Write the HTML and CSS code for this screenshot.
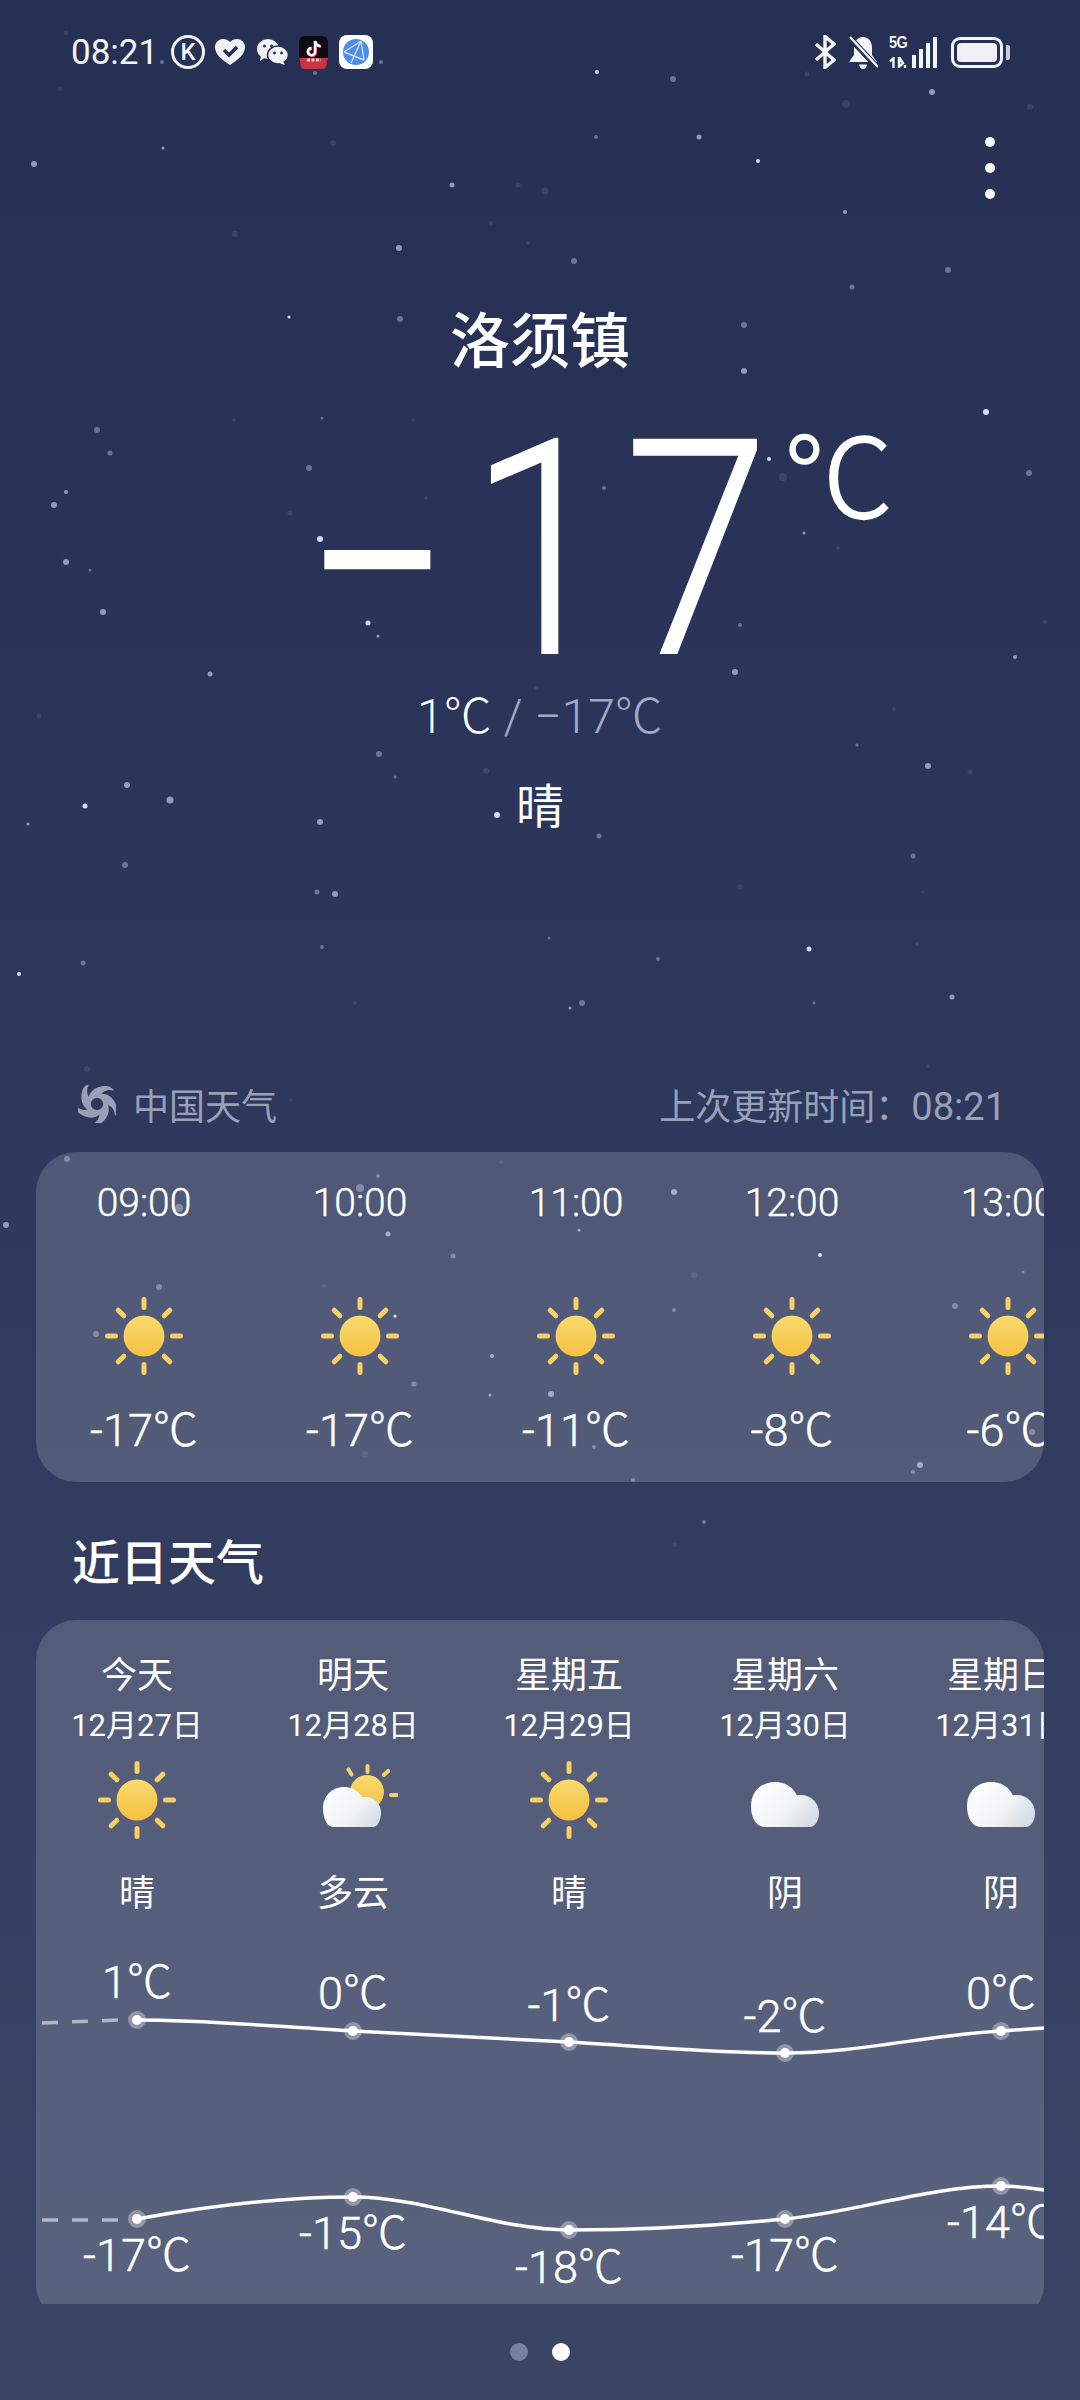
FILE: index.html
```html
<!DOCTYPE html>
<html lang="zh-CN">

<head>
  <meta charset="UTF-8">
  <meta name="viewport" content="width=device-width, initial-scale=1.0">
  <title>天气</title>
  <link rel="stylesheet" href="styles.css">
</head>

<body>

  <!-- shared icons -->
  <svg class="defs" width="0" height="0">
    <defs>
      <linearGradient id="sunFill" x1="0" y1="0" x2="0" y2="1">
        <stop offset="0" stop-color="#f8dc6e"/>
        <stop offset="1" stop-color="#f5bf42"/>
      </linearGradient>
      <linearGradient id="cloudFill" gradientUnits="userSpaceOnUse" x1="-30" y1="-18" x2="30" y2="30">
        <stop offset="0" stop-color="#ffffff"/>
        <stop offset="0.55" stop-color="#f1f4f7"/>
        <stop offset="1" stop-color="#cdd6e0"/>
      </linearGradient>
      <g id="ray"><rect x="-2.5" y="-39" width="5" height="13" rx="2.5" fill="#f6d064"/></g>
      <symbol id="sun" viewBox="-45 -45 90 90">
        <circle r="20.5" fill="url(#sunFill)"/>
        <use href="#ray"/>
        <use href="#ray" transform="rotate(45)"/>
        <use href="#ray" transform="rotate(90)"/>
        <use href="#ray" transform="rotate(135)"/>
        <use href="#ray" transform="rotate(180)"/>
        <use href="#ray" transform="rotate(225)"/>
        <use href="#ray" transform="rotate(270)"/>
        <use href="#ray" transform="rotate(315)"/>
      </symbol>
      <symbol id="cloud" viewBox="-45 -45 90 90">
        <path d="M-20 27 C-29 27 -34 18 -34 6 C-34 -8 -24 -18 -10 -18 C4 -18 14 -8 14 6 L14 27 Z" fill="url(#cloudFill)"/>
        <path d="M4 27 C0 24 -2 19 -2 13 C-2 3 6 -5 16 -5 C26 -5 34 3 34 13 C34 21 30 27 24 27 Z" fill="url(#cloudFill)"/>
      </symbol>
      <symbol id="partly" viewBox="-45 -45 90 90">
        <circle cx="14" cy="-8" r="17" fill="url(#sunFill)"/>
        <rect x="12.5" y="-36" width="4" height="10" rx="2" fill="#f6d064"/>
        <rect x="-5" y="-33" width="4" height="10" rx="2" fill="#f6d064" transform="rotate(-32 -3 -28)"/>
        <rect x="31" y="-32" width="4" height="10" rx="2" fill="#f6d064" transform="rotate(48 33 -27)"/>
        <rect x="36" y="-7" width="10" height="4" rx="2" fill="#f6d064"/>
        <path d="M-20 27 C-26 27 -30 18 -30 8 C-30 -4 -21 -13 -9 -13 C3 -13 12 -4 12 8 L12 27 Z" fill="url(#cloudFill)"/>
        <path d="M0 27 C-2 23 -2 17 -2 12 C-2 4 5 -3 13 -3 C21 -3 28 4 28 12 C28 20 25 27 20 27 Z" fill="url(#cloudFill)"/>
      </symbol>
    </defs>
  </svg>

  <!-- drifting snow behind everything -->
  <svg class="snow" viewBox="0 0 1080 2400">
    <g class="s1">
      <circle cx="597" cy="72" r="2"/><circle cx="758" cy="161" r="2"/><circle cx="289" cy="317" r="1.6"/>
      <circle cx="986" cy="412" r="3"/><circle cx="769" cy="459" r="2"/><circle cx="320" cy="539" r="3"/>
      <circle cx="368" cy="623" r="2.5"/><circle cx="85" cy="806" r="2.5"/><circle cx="497" cy="815" r="3"/>
      <circle cx="809" cy="949" r="2.5"/><circle cx="19" cy="974" r="2"/><circle cx="820" cy="1255" r="2"/>
      <circle cx="395" cy="1316" r="1.6"/>
    </g>
    <g class="s2">
      <circle cx="932" cy="92" r="3"/><circle cx="699" cy="137" r="2.5"/><circle cx="163" cy="148" r="1.5"/>
      <circle cx="34" cy="164" r="3"/><circle cx="452" cy="185" r="2.5"/><circle cx="845" cy="212" r="2"/>
      <circle cx="399" cy="248" r="3"/><circle cx="744" cy="371" r="3"/><circle cx="66" cy="492" r="2"/>
      <circle cx="54" cy="505" r="3"/><circle cx="804" cy="533" r="1.5"/><circle cx="66" cy="562" r="3"/>
      <circle cx="103" cy="612" r="3"/><circle cx="378" cy="636" r="1.5"/><circle cx="210" cy="674" r="2.5"/>
      <circle cx="735" cy="672" r="3"/><circle cx="1015" cy="657" r="2"/><circle cx="928" cy="766" r="3"/>
      <circle cx="127" cy="785" r="3"/><circle cx="170" cy="800" r="3.5"/><circle cx="28" cy="824" r="1.5"/>
      <circle cx="320" cy="822" r="3"/><circle cx="335" cy="894" r="3"/><circle cx="952" cy="997" r="2.5"/>
      <circle cx="570" cy="1008" r="1.5"/><circle cx="674" cy="1192" r="3"/><circle cx="6" cy="1225" r="3"/>
      <circle cx="388" cy="1234" r="2.5"/><circle cx="579" cy="1230" r="1.6"/><circle cx="492" cy="1356" r="2"/>
      <circle cx="490" cy="1395" r="1.5"/><circle cx="551" cy="1394" r="3"/><circle cx="920" cy="1465" r="3"/>
    </g>
    <g class="s3">
      <circle cx="673" cy="79" r="3"/><circle cx="596" cy="137" r="2"/><circle cx="315" cy="73" r="2"/>
      <circle cx="381" cy="62" r="2"/><circle cx="162" cy="62" r="2"/><circle cx="574" cy="261" r="3"/>
      <circle cx="948" cy="270" r="3"/><circle cx="852" cy="287" r="2.5"/><circle cx="400" cy="319" r="3"/>
      <circle cx="744" cy="325" r="3"/><circle cx="97" cy="430" r="3"/><circle cx="110" cy="453" r="2.5"/>
      <circle cx="322" cy="418" r="1.5"/><circle cx="309" cy="468" r="3"/><circle cx="1029" cy="473" r="3"/>
      <circle cx="604" cy="488" r="2"/><circle cx="90" cy="570" r="1.5"/><circle cx="740" cy="625" r="2"/>
      <circle cx="379" cy="754" r="3"/><circle cx="395" cy="777" r="1.5"/><circle cx="857" cy="745" r="1.5"/>
      <circle cx="599" cy="836" r="2.5"/><circle cx="125" cy="865" r="3"/><circle cx="913" cy="856" r="2.5"/>
      <circle cx="317" cy="892" r="2.5"/><circle cx="322" cy="947" r="2"/><circle cx="549" cy="938" r="1.5"/>
      <circle cx="658" cy="959" r="2"/><circle cx="83" cy="963" r="2.5"/><circle cx="814" cy="1003" r="1.5"/>
      <circle cx="582" cy="1003" r="3"/><circle cx="67" cy="1159" r="3"/><circle cx="378" cy="1176" r="2"/>
      <circle cx="360" cy="1188" r="4"/><circle cx="179" cy="1208" r="4"/><circle cx="453" cy="1256" r="2.5"/>
      <circle cx="1023" cy="1272" r="1.5"/><circle cx="159" cy="1287" r="3"/><circle cx="955" cy="1306" r="3"/>
      <circle cx="674" cy="1310" r="2"/><circle cx="96" cy="1334" r="3"/><circle cx="414" cy="1384" r="2.5"/>
      <circle cx="913" cy="1472" r="2"/><circle cx="633" cy="1480" r="2"/><circle cx="594" cy="1447" r="2"/>
      <circle cx="1032" cy="1432" r="3"/><circle cx="704" cy="1522" r="2"/>
    </g>
    <g class="s4">
      <circle cx="807" cy="74" r="2.5"/><circle cx="846" cy="104" r="4"/><circle cx="1030" cy="107" r="3"/>
      <circle cx="60" cy="89" r="2"/><circle cx="66" cy="33" r="2"/><circle cx="333" cy="143" r="3"/>
      <circle cx="518" cy="185" r="2.5"/><circle cx="545" cy="191" r="3.5"/><circle cx="235" cy="234" r="3"/>
      <circle cx="491" cy="223" r="2"/><circle cx="528" cy="243" r="2"/><circle cx="234" cy="420" r="2"/>
      <circle cx="413" cy="420" r="2"/><circle cx="783" cy="477" r="4"/><circle cx="426" cy="498" r="2"/>
      <circle cx="838" cy="548" r="2"/><circle cx="1045" cy="622" r="2"/><circle cx="290" cy="513" r="2.5"/>
      <circle cx="536" cy="688" r="2.5"/><circle cx="39" cy="716" r="2.5"/><circle cx="894" cy="709" r="2"/>
      <circle cx="970" cy="772" r="2.5"/><circle cx="486" cy="771" r="3"/><circle cx="740" cy="887" r="2.5"/>
      <circle cx="923" cy="892" r="1.5"/><circle cx="917" cy="944" r="2"/><circle cx="355" cy="1003" r="2"/>
      <circle cx="87" cy="1069" r="3"/><circle cx="928" cy="1066" r="2"/><circle cx="291" cy="1100" r="2"/>
      <circle cx="501" cy="1162" r="2"/><circle cx="694" cy="1275" r="3"/><circle cx="324" cy="1286" r="2"/>
      <circle cx="365" cy="1454" r="3"/><circle cx="675" cy="1545" r="2"/>
    </g>
  </svg>

  <div class="page">

    <div class="status">
      <div class="status-left">
        <span class="clock">08:21</span>
        <span class="k-badge">K</span>
        <svg class="ico-heart" viewBox="0 0 30 26">
          <path d="M15 26 C6 20 0 15 0 8 C0 3 4 0 8 0 C11 0 13 1 15 3 C17 1 19 0 22 0 C26 0 30 3 30 8 C30 15 24 20 15 26 Z" fill="#f2f3f8"/>
          <path d="M9 11 L14 16 L22 8" fill="none" stroke="#273055" stroke-width="3.6"/>
        </svg>
        <svg class="ico-wechat" viewBox="0 0 31 26">
          <ellipse cx="11" cy="10" rx="11" ry="10" fill="#f2f3f8"/>
          <path d="M4 16 L3 22 L9 18 Z" fill="#f2f3f8"/>
          <ellipse cx="21" cy="16" rx="10.5" ry="9" fill="#f2f3f8" stroke="#273055" stroke-width="1.5"/>
          <path d="M26 22 L28 26 L22 24 Z" fill="#f2f3f8"/>
          <circle cx="7.5" cy="7" r="1.5" fill="#273055"/>
          <circle cx="14.5" cy="7" r="1.5" fill="#273055"/>
          <circle cx="17.5" cy="14" r="1.4" fill="#273055"/>
          <circle cx="24.5" cy="14" r="1.4" fill="#273055"/>
        </svg>
        <svg class="ico-tiktok" viewBox="0 0 29 33">
          <rect width="29" height="30" rx="6" fill="#0b0b12"/>
          <path d="M0 22 H29 L27 31 Q26 33 23 33 H6 Q3 33 2 31 Z" fill="#c9343e"/>
          <path d="M8 24 H22" stroke="#f6d0c8" stroke-width="3" stroke-dasharray="3 1.5"/>
          <path d="M16 5 V15.5 A3.6 3.6 0 1 1 12.4 12 M16 5 C16.5 8 18.5 10 21.5 10" fill="none" stroke="#ff3c5c" stroke-width="2.8" transform="translate(.8 .6)"/>
          <path d="M16 5 V15.5 A3.6 3.6 0 1 1 12.4 12 M16 5 C16.5 8 18.5 10 21.5 10" fill="none" stroke="#fff" stroke-width="2.6"/>
        </svg>
        <svg class="ico-browser" viewBox="0 0 34 34">
          <rect width="34" height="34" rx="8" fill="#fff"/>
          <circle cx="17" cy="17" r="13" fill="#4f8be8"/>
          <path d="M5 17 L22 6 M5 17 L25 25 M22 6 L25 25 M22 6 L12 28" fill="none" stroke="#cfe0fb" stroke-width="1.4"/>
        </svg>
      </div>
      <div class="status-right">
        <svg class="ico-bt" viewBox="0 0 22 34">
          <path d="M2 9 L20 25 L11 32.5 V1.5 L20 9 L2 25" fill="none" stroke="#f4f5f9" stroke-width="3.4"/>
        </svg>
        <svg class="ico-bell" viewBox="0 0 30 33">
          <path d="M15 1 C21 1 24 6 24 12 V19 L29 26 H1 L6 19 V12 C6 6 9 1 15 1 Z" fill="#f4f5f9"/>
          <path d="M11 28.5 H19 Q18 33 15 33 Q12 33 11 28.5 Z" fill="#f4f5f9"/>
          <path d="M1 1 L29 31" stroke="#273055" stroke-width="6"/>
          <path d="M2 1 L30 31" stroke="#f4f5f9" stroke-width="2.4"/>
        </svg>
        <div class="signal">
          <div class="net">
            <span class="net-type">5G</span>
            <svg class="net-arrows" viewBox="0 0 18 11">
              <path d="M4.5 11 V1 L1 4.5 M10 0 V10 L14 6 Z M16 8 V11" fill="none" stroke="#f4f5f9" stroke-width="2.4"/>
            </svg>
          </div>
          <div class="bars">
            <i class="bar bar-1"></i><i class="bar bar-2"></i><i class="bar bar-3"></i><i class="bar bar-4"></i>
          </div>
        </div>
        <div class="battery">
          <div class="battery-body"><div class="battery-level"></div></div>
          <div class="battery-nub"></div>
        </div>
      </div>
    </div>

    <div class="actions">
      <div class="kebab"><i></i><i></i><i></i></div>
    </div>

    <div class="city">洛须镇</div>

    <div class="now">
      <span class="now-minus">−</span><span class="now-value">17</span><span class="now-unit">℃</span>
    </div>

    <div class="range"><span>1℃</span><span class="range-low"> / −17℃</span></div>
    <div class="cond">晴</div>

    <div class="source">
      <div class="source-name">
        <svg class="ico-swirl" viewBox="-20 -20 40 40">
          <g fill="#9aa0b5">
            <path id="petal" d="M-9 -3 C-10 -12 -2 -19 9 -19 C13 -19 16 -17 18 -14 C12 -16 6 -14 3 -8 C-1 -9 -6 -7 -9 -3 Z"/>
            <use href="#petal" transform="rotate(72)"/>
            <use href="#petal" transform="rotate(144)"/>
            <use href="#petal" transform="rotate(216)"/>
            <use href="#petal" transform="rotate(288)"/>
          </g>
          <circle r="8" fill="none" stroke="#9aa0b5" stroke-width="3"/>
        </svg>
        <span>中国天气</span>
      </div>
      <span>上次更新时间：<span class="source-time">08:21</span></span>
    </div>

    <div class="card hourly">
      <div class="hour">
        <div class="hour-time">09:00</div>
        <svg class="wx"><use href="#sun"/></svg>
        <div class="hour-temp">-17℃</div>
      </div>
      <div class="hour">
        <div class="hour-time">10:00</div>
        <svg class="wx"><use href="#sun"/></svg>
        <div class="hour-temp">-17℃</div>
      </div>
      <div class="hour">
        <div class="hour-time">11:00</div>
        <svg class="wx"><use href="#sun"/></svg>
        <div class="hour-temp">-11℃</div>
      </div>
      <div class="hour">
        <div class="hour-time">12:00</div>
        <svg class="wx"><use href="#sun"/></svg>
        <div class="hour-temp">-8℃</div>
      </div>
      <div class="hour">
        <div class="hour-time">13:00</div>
        <svg class="wx"><use href="#sun"/></svg>
        <div class="hour-temp">-6℃</div>
      </div>
    </div>

    <h2 class="section-title">近日天气</h2>

    <div class="daily-clip">
      <div class="card daily">
        <div class="days">
          <div class="day">
            <div class="day-name">今天</div>
            <div class="day-date">12月27日</div>
            <svg class="wx"><use href="#sun"/></svg>
            <div class="day-cond">晴</div>
          </div>
          <div class="day">
            <div class="day-name">明天</div>
            <div class="day-date">12月28日</div>
            <svg class="wx"><use href="#partly"/></svg>
            <div class="day-cond">多云</div>
          </div>
          <div class="day">
            <div class="day-name">星期五</div>
            <div class="day-date">12月29日</div>
            <svg class="wx"><use href="#sun"/></svg>
            <div class="day-cond">晴</div>
          </div>
          <div class="day">
            <div class="day-name">星期六</div>
            <div class="day-date">12月30日</div>
            <svg class="wx"><use href="#cloud"/></svg>
            <div class="day-cond">阴</div>
          </div>
          <div class="day">
            <div class="day-name">星期日</div>
            <div class="day-date">12月31日</div>
            <svg class="wx"><use href="#cloud"/></svg>
            <div class="day-cond">阴</div>
          </div>
        </div>

        <svg class="chart" viewBox="0 0 1008 354">
          <path class="chart-dash" d="M5 73 L82 70"/>
          <path class="chart-dash" d="M5 270 L82 270"/>
          <path class="chart-line" d="M100 70 C172 70 244 77 316 81 C388 85 460 88 532 92 C604 96 676 103 748 103 C820 103 892 85 964 81 C979 80 994 79 1008 78"/>
          <path class="chart-line" d="M100 269 C172 256 244 247 316 247 C388 247 460 280 532 280 C604 280 676 276 748 269 C820 262 892 236 964 236 C979 236 994 238 1008 240"/>
          <g class="chart-ring">
            <circle cx="100" cy="70" r="9"/><circle cx="316" cy="81" r="9"/><circle cx="532" cy="92" r="9"/><circle cx="748" cy="103" r="9"/><circle cx="964" cy="81" r="9"/>
            <circle cx="100" cy="269" r="9"/><circle cx="316" cy="247" r="9"/><circle cx="532" cy="280" r="9"/><circle cx="748" cy="269" r="9"/><circle cx="964" cy="236" r="9"/>
          </g>
          <g class="chart-dot">
            <circle cx="100" cy="70" r="5"/><circle cx="316" cy="81" r="5"/><circle cx="532" cy="92" r="5"/><circle cx="748" cy="103" r="5"/><circle cx="964" cy="81" r="5"/>
            <circle cx="100" cy="269" r="5"/><circle cx="316" cy="247" r="5"/><circle cx="532" cy="280" r="5"/><circle cx="748" cy="269" r="5"/><circle cx="964" cy="236" r="5"/>
          </g>
          <g class="chart-label">
            <text x="100" y="48">1℃</text>
            <text x="316" y="59">0℃</text>
            <text x="532" y="71">-1℃</text>
            <text x="748" y="82">-2℃</text>
            <text x="964" y="59">0℃</text>
            <text x="100" y="321">-17℃</text>
            <text x="316" y="299">-15℃</text>
            <text x="532" y="333">-18℃</text>
            <text x="748" y="321">-17℃</text>
            <text x="964" y="288">-14℃</text>
          </g>
        </svg>
      </div>
    </div>

    <div class="pager">
      <i class="pager-dot"></i>
      <i class="pager-dot pager-dot-on"></i>
    </div>

  </div>

</body>

</html>
```

FILE: styles.css
```css
* {
  box-sizing: border-box;
}

html,
body {
  margin: 0;
  padding: 0;
}

body {
  position: relative;
  width: 1080px;
  height: 2400px;
  overflow: hidden;
  color: #fff;
  font-family: Roboto, "Noto Sans CJK SC", sans-serif;
  background: linear-gradient(180deg, #262f54 0%, #2d385c 45%, #3a4566 100%);
}

.defs {
  position: absolute;
}

.snow {
  position: absolute;
  top: 0;
  left: 0;
  width: 1080px;
  height: 2400px;
}

.s1 { fill: #d5dcf5; }
.s2 { fill: #b7bfdc; fill-opacity: 0.75; }
.s3 { fill: #8f98bb; fill-opacity: 0.65; }
.s4 { fill: #7c86a9; fill-opacity: 0.22; }

.page {
  position: relative;
}

/* Status bar */
.status {
  display: flex;
  justify-content: space-between;
  align-items: center;
  height: 104px;
  padding: 0 70px 0 71px;
}

.status-left,
.status-right {
  display: flex;
  align-items: center;
}

.clock {
  width: 100px;
  font-size: 35px;
  letter-spacing: 0;
  color: #f4f5f9;
}

.k-badge {
  display: flex;
  justify-content: center;
  align-items: center;
  width: 34px;
  height: 34px;
  border: 3.5px solid #f2f3f8;
  border-radius: 50%;
  font-size: 24px;
  font-weight: 500;
  color: #f2f3f8;
}

.ico-heart { width: 30px; height: 26px; margin-left: 10px; }
.ico-wechat { width: 31px; height: 26px; margin-left: 12px; }
.ico-tiktok { width: 29px; height: 33px; margin-left: 11px; }
.ico-browser { width: 34px; height: 34px; margin-left: 11px; }

.ico-bt { width: 22px; height: 34px; }
.ico-bell { width: 30px; height: 33px; margin-left: 12px; }

.signal {
  display: flex;
  align-items: flex-end;
  height: 32px;
  margin-left: 11px;
}

.net {
  display: flex;
  flex-direction: column;
  justify-content: space-between;
  width: 20px;
  height: 32px;
}

.net-type {
  font-family: "Liberation Sans", sans-serif;
  font-size: 17px;
  font-weight: 700;
  line-height: 14px;
  letter-spacing: -0.5px;
  color: #f4f5f9;
  transform: scaleX(0.85);
  transform-origin: left center;
}

.net-arrows {
  width: 18px;
  height: 11px;
}

.bars {
  display: flex;
  align-items: flex-end;
  gap: 3px;
  margin-left: 3px;
}

.bar {
  display: block;
  width: 4px;
  background: #f4f5f9;
}

.bar-1 { height: 13px; }
.bar-2 { height: 19px; }
.bar-3 { height: 25px; }
.bar-4 { height: 31px; }

.battery {
  display: flex;
  align-items: center;
  margin-left: 14px;
}

.battery-body {
  width: 52px;
  height: 31px;
  padding: 3px;
  border: 3px solid #f4f5f9;
  border-radius: 9px;
}

.battery-level {
  height: 100%;
  border-radius: 4px;
  background: #f0f1f6;
}

.battery-nub {
  width: 4px;
  height: 15px;
  margin-left: 3px;
  border-radius: 0 2px 2px 0;
  background: #c9ccda;
}

/* Header */
.actions {
  display: flex;
  justify-content: flex-end;
  align-items: center;
  height: 128px;
  padding-right: 85px;
}

.kebab {
  display: flex;
  flex-direction: column;
  gap: 16px;
}

.kebab i {
  display: block;
  width: 10px;
  height: 10px;
  border-radius: 50%;
  background: #fff;
}

.city {
  margin-top: 71px;
  font-size: 60px;
  font-weight: 500;
  line-height: 80px;
  text-align: center;
}

.now {
  display: flex;
  align-items: flex-start;
  height: 260px;
  margin-top: 38px;
  padding-left: 303px;
  font-size: 300px;
  font-weight: 300;
  line-height: 260px;
}

.now-minus {
  margin-top: 12px;
  font-size: 260px;
  font-weight: 400;
}

.now-value {
  width: 315px;
  margin-left: 17px;
  letter-spacing: 12px;
  -webkit-text-stroke: 2px #fff;
  transform: scaleX(0.87);
  transform-origin: left center;
}

.now-unit {
  font-size: 110px;
  font-weight: 300;
  line-height: 120px;
  -webkit-text-stroke: 1.5px #fff;
}

.range {
  margin-top: 6px;
  font-size: 48px;
  font-weight: 300;
  line-height: 60px;
  text-align: center;
}

.range-low {
  color: #a3a9c0;
}

.cond {
  margin-top: 31px;
  font-size: 48px;
  line-height: 60px;
  text-align: center;
}

/* Source row */
.source {
  display: flex;
  justify-content: space-between;
  align-items: center;
  height: 50px;
  margin-top: 241px;
  padding: 0 74px 0 78px;
  font-size: 36px;
  color: #9aa0b5;
}

.source-name {
  display: flex;
  align-items: center;
  gap: 17px;
}

.source-time {
  font-size: 38px;
}

.ico-swirl {
  width: 38px;
  height: 38px;
}

/* Cards */
.card {
  margin: 0 36px;
  overflow: hidden;
  border-radius: 40px;
  background: rgba(255, 255, 255, 0.16);
}

.hourly {
  display: flex;
  height: 330px;
  margin-top: 23px;
  padding-top: 29px;
}

.hour {
  display: flex;
  flex: 0 0 216px;
  flex-direction: column;
  align-items: center;
}

.hour-time {
  font-size: 39px;
  font-weight: 300;
  line-height: 44px;
  -webkit-text-stroke: 0.4px #fff;
}

.wx {
  display: block;
  width: 90px;
  height: 90px;
}

.hour .wx {
  margin-top: 66px;
}

.hour-temp {
  margin-top: 25px;
  font-size: 45px;
  font-weight: 300;
  line-height: 50px;
  white-space: nowrap;
  -webkit-text-stroke: 0.5px #fff;
}

.section-title {
  margin: 52px 0 0 72px;
  font-size: 48px;
  font-weight: 500;
  line-height: 60px;
}

.daily-clip {
  height: 684px;
  margin-top: 26px;
  overflow: hidden;
}

.daily {
  height: 704px;
  padding-top: 34px;
}

.days {
  display: flex;
  margin-left: -7px;
}

.day {
  display: flex;
  flex: 0 0 216px;
  flex-direction: column;
  align-items: center;
}

.day-name {
  font-size: 36px;
  line-height: 44px;
}

.day-date {
  margin-top: 10px;
  font-size: 31px;
  line-height: 36px;
  white-space: nowrap;
}

.day .wx {
  margin-top: 11px;
}

.day-cond {
  margin-top: 27px;
  font-size: 36px;
  line-height: 44px;
}

/* Temperature chart */
.chart {
  display: block;
  width: 1008px;
  height: 354px;
  margin-top: 34px;
  margin-left: 1px;
}

.chart-line {
  fill: none;
  stroke: #fff;
  stroke-width: 3.5;
}

.chart-dash {
  fill: none;
  stroke: rgba(255, 255, 255, 0.55);
  stroke-width: 3.5;
  stroke-dasharray: 16 14;
}

.chart-ring {
  fill: rgba(255, 255, 255, 0.35);
}

.chart-dot {
  fill: #fff;
}

.chart-label text {
  fill: #fff;
  stroke: #fff;
  stroke-width: 0.5;
  font-size: 45px;
  font-weight: 300;
  text-anchor: middle;
}

/* Pager */
.pager {
  display: flex;
  justify-content: center;
  gap: 24px;
  margin-top: 39px;
}

.pager-dot {
  display: block;
  width: 18px;
  height: 18px;
  border-radius: 50%;
  background: #7b819d;
}

.pager-dot-on {
  background: #fff;
}
```
